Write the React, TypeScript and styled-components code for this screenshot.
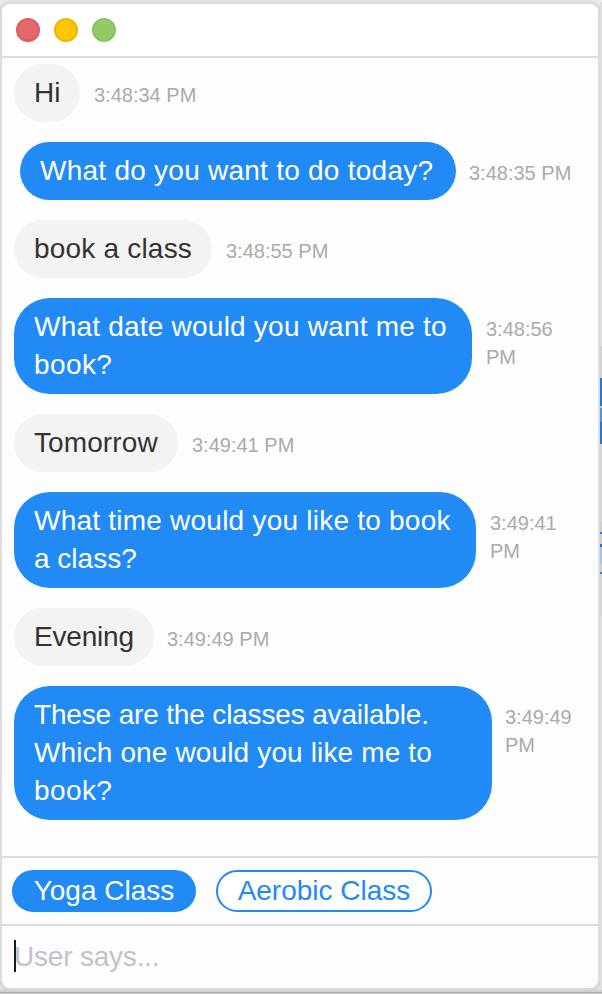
import React from 'react';
import styled, { createGlobalStyle } from 'styled-components';

const Global = createGlobalStyle`
  * { box-sizing: border-box; }
  body { margin: 0; background: #fff; font-family: "Liberation Sans", Arial, sans-serif; overflow: hidden; }
`;
const Desktop = styled.main`
  width: 602px; height: 994px; padding-top: 2px; overflow: hidden;
  display: grid; grid-template-columns: 600px 2px; grid-template-rows: 988px 2px 1px 1px;
  background: #ececec;
`;
const Frame = styled.section`
  border: 2px solid #dcdcdc; border-radius: 10px; background: #fdfdfd;
  display: flex; flex-direction: column; overflow: hidden;
  box-shadow: 0 1px 4px rgba(0, 0, 0, 0.22);
`;
const TitleBar = styled.header`
  height: 54px; flex: none; display: flex; gap: 14px; padding: 14px; border-bottom: 2px solid #dcdcdc; background: #fff;
`;
const Dot = styled.span<{ $fill: string; $edge: string }>`
  width: 24px; height: 24px; border-radius: 50%; background: ${p => p.$fill}; border: 2px solid ${p => p.$edge};
`;
const Messages = styled.div`
  flex: 1; padding: 6px 12px; display: flex; flex-direction: column; gap: 20px;
`;
const Row = styled.div<{ $indent?: number }>`
  display: flex; align-items: flex-start; padding-left: ${p => p.$indent ?? 0}px;
`;
const Bubble = styled.div<{ $bot?: boolean; $w: number }>`
  width: ${p => p.$w}px; flex: none; padding: 10px 0 10px 20px; border-radius: 36px; white-space: nowrap;
  font-size: 28px; line-height: 38px; color: ${p => (p.$bot ? '#fff' : '#333')};
  background: ${p => (p.$bot ? '#218af5' : '#f3f3f3')};
`;
const Line = styled.span<{ $s: number }>`
  display: block; letter-spacing: ${p => p.$s}px;
`;
const Time = styled.time<{ $gap?: number }>`
  margin: 17px 0 0 ${p => p.$gap ?? 14}px; font-size: 20px; line-height: 28px; color: #aaa; white-space: pre;
`;
const Options = styled.div`
  height: 68px; flex: none; border-top: 2px solid #dcdcdc; display: flex; gap: 20px; padding: 12px 10px;
`;
const Option = styled.button<{ $active?: boolean; $w: number }>`
  width: ${p => p.$w}px; height: 42px; padding: 0; border: 2px solid #218af5; border-radius: 21px;
  font: 28px/38px "Liberation Sans", Arial, sans-serif; color: ${p => (p.$active ? '#fff' : '#218af5')};
  background: ${p => (p.$active ? '#218af5' : '#fff')};
`;
const InputBar = styled.div`
  height: 64px; flex: none; border-top: 2px solid #dcdcdc; padding: 12px; display: flex;
  font-size: 28px; line-height: 38px; letter-spacing: -0.2px; color: #c0c3cc;
`;
const Caret = styled.span`
  width: 2px; height: 32px; margin: 2px -2px 0 0; background: #111c24; z-index: 1;
`;
const Behind = styled.aside`
  display: flex; flex-direction: column; padding-top: 344px; background: #dfdfdf;
`;
const Slice = styled.span<{ $h: number; $c: string }>`
  height: ${p => p.$h}px; background: ${p => p.$c};
`;
const Strip = styled.div<{ $c: string }>`
  grid-column: 1 / -1; background: ${p => p.$c};
`;

const messages = [
  { w: 66, lines: [{ t: 'Hi', s: 0 }], time: '3:48:34 PM' },
  { w: 436, lines: [{ t: 'What do you want to do today?', s: 0.25 }], time: '3:48:35 PM', bot: true, indent: 6, gap: 13 },
  { w: 198, lines: [{ t: 'book a class', s: 0.2 }], time: '3:48:55 PM' },
  { w: 458, lines: [{ t: 'What date would you want me to', s: 0.22 }, { t: 'book?', s: 0.4 }], time: '3:48:56\nPM', bot: true },
  { w: 164, lines: [{ t: 'Tomorrow', s: 0.1 }], time: '3:49:41 PM' },
  { w: 462, lines: [{ t: 'What time would you like to book', s: 0.23 }, { t: 'a class?', s: 0 }], time: '3:49:41\nPM', bot: true },
  { w: 140, lines: [{ t: 'Evening', s: -0.2 }], time: '3:49:49 PM', gap: 13 },
  {
    w: 478,
    lines: [
      { t: 'These are the classes available.', s: -0.16 },
      { t: 'Which one would you like me to', s: 0.14 },
      { t: 'book?', s: 0.4 },
    ],
    time: '3:49:49\nPM', bot: true, gap: 13,
  },
];

const slices = [
  { h: 32, c: '#d2d2d2' }, { h: 28, c: '#1d7ada' }, { h: 2, c: '#b8cfe5' }, { h: 14, c: '#4b96e1' },
  { h: 22, c: '#1d7ada' }, { h: 78, c: '#d5d5d5' }, { h: 10, c: '#cfcfcf' }, { h: 2, c: '#2a80d8' },
  { h: 10, c: '#cfcfcf' }, { h: 3, c: '#1d7ada' }, { h: 17, c: '#a9c3e0' }, { h: 8, c: '#cfcfcf' },
  { h: 2, c: '#2a80d8' }, { h: 42, c: '#d5d5d5' },
];

export default function App() {
  return (
    <Desktop>
      <Global />
      <Frame>
        <TitleBar>
          <Dot $fill="#e1696a" $edge="#e05a5e" />
          <Dot $fill="#ffc600" $edge="#eeb600" />
          <Dot $fill="#91ca67" $edge="#87c35e" />
        </TitleBar>
        <Messages>
          {messages.map((m, i) => (
            <Row key={i} $indent={m.indent}>
              <Bubble $w={m.w} $bot={m.bot}>{m.lines.map(l => <Line key={l.t} $s={l.s}>{l.t}</Line>)}</Bubble>
              <Time $gap={m.gap}>{m.time}</Time>
            </Row>
          ))}
        </Messages>
        <Options>
          <Option $active $w={184}>Yoga Class</Option>
          <Option $w={216}>Aerobic Class</Option>
        </Options>
        <InputBar><Caret />User says...</InputBar>
      </Frame>
      <Behind>
        {slices.map((s, i) => <Slice key={i} $h={s.h} $c={s.c} />)}
      </Behind>
      <Strip $c="#d0d0d0" />
      <Strip $c="#acacac" />
      <Strip $c="#c9c9c9" />
    </Desktop>
  );
}
